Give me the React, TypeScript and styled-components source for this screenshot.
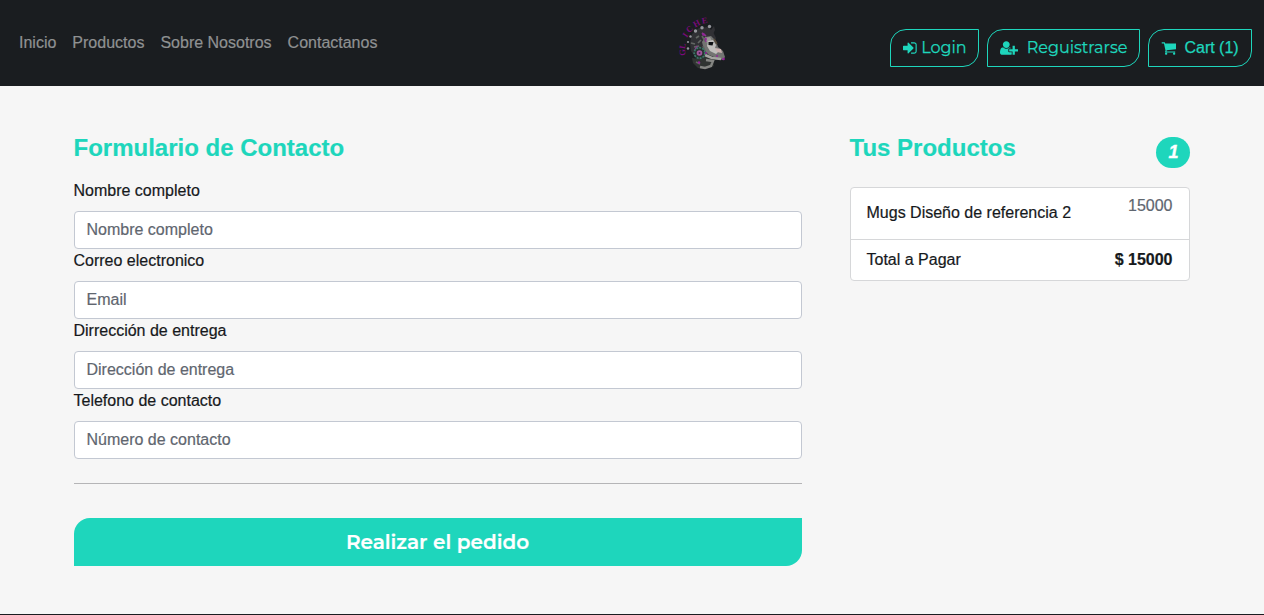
import React from "react";
import styled, { createGlobalStyle } from "styled-components";

const TEAL = "#1ed6bc";
const SANS = '"Liberation Sans", Arial, sans-serif';
const ROUND = 'Montserrat, Inter, "Open Sans", sans-serif';

const GlobalStyle = createGlobalStyle`
  *, *::before, *::after { box-sizing: border-box; }
  body {
    margin: 0;
    background: #f6f6f6;
    color: #16191c;
    font: 16px/24px ${SANS};
    -webkit-text-stroke: 0.2px;
    overflow: hidden;
  }
`;

const Page = styled.div`
  display: flex;
  flex-direction: column;
  height: 615px;
  border-bottom: 1px solid #1a1d20;
`;

const Navbar = styled.header`
  display: flex;
  align-items: center;
  height: 86px;
  padding: 0 12px 0 19px;
  background: #1a1d20;
`;

const Menu = styled.nav`
  display: flex;
  gap: 16px;
  width: 655px;
  padding-bottom: 1px;
`;

const MenuLink = styled.a`
  color: #8f9192;
  white-space: nowrap;
`;

const LogoSvg = styled.svg`
  width: 60px;
  height: 60px;
  flex: none;
  -webkit-text-stroke: 0;
`;

const Actions = styled.div`
  display: flex;
  gap: 8px;
  margin-left: auto;
  padding-top: 10px;
`;

const ActionButton = styled.button<{ $width: number; $gap: number; $plain?: boolean }>`
  display: flex;
  align-items: center;
  gap: ${(p) => p.$gap}px;
  width: ${(p) => p.$width}px;
  height: 38px;
  padding: 0 0 1px 12px;
  border: 1px solid ${TEAL};
  border-radius: 16px 0 16px 0;
  background: transparent;
  color: ${TEAL};
  font: 16px/24px ${(p) => (p.$plain ? SANS : ROUND)};
  -webkit-text-stroke: 0.25px;
  white-space: nowrap;
`;

const Glyph = styled.svg`
  height: 16px;
  flex: none;
  fill: currentColor;
`;

const Content = styled.main`
  display: grid;
  grid-template-columns: 728px 340px;
  column-gap: 48px;
  align-items: start;
  padding: 47px 74px 0;
`;

const Heading = styled.h4`
  margin: 0;
  color: ${TEAL};
  font-size: 24px;
  line-height: 29px;
  font-weight: 700;
  text-indent: -0.5px;
`;

const Form = styled.form`
  display: flex;
  flex-direction: column;
`;

const FormHeading = styled(Heading)`
  margin-bottom: 17px;
`;

const Field = styled.label`
  display: flex;
  flex-direction: column;
  gap: 8px;
  text-indent: -0.5px;
`;

const Input = styled.input`
  width: 100%;
  height: 38px;
  padding: 0 11.5px 1px;
  border: 1px solid #c3c8d2;
  border-radius: 4px;
  background: #fff;
  font: 16px/24px ${SANS};
  text-indent: 0;
  -webkit-text-stroke: 0.2px;
  &::placeholder { color: #5f666f; opacity: 1; }
`;

const Divider = styled.hr`
  width: 100%;
  height: 1px;
  margin: 24px 0 34px;
  border: 0;
  background: #b5b5b7;
`;

const Submit = styled.button`
  height: 48px;
  border: 0;
  padding: 0 1px 0 0;
  border-radius: 16px 0 16px 0;
  background: ${TEAL};
  color: #fff;
  font: 600 20px/30px ${ROUND};
  -webkit-text-stroke: 0.2px;
`;

const SummaryHeader = styled.div`
  display: flex;
  justify-content: space-between;
  height: 54px;
`;

const Badge = styled.span`
  width: 34px;
  height: 31px;
  margin-top: 4px;
  padding-left: 1px;
  border-radius: 16px;
  background: ${TEAL};
  color: #fff;
  font: italic 700 18px/31px "Liberation Sans Narrow", ${SANS};
  -webkit-text-stroke: 0.4px;
  text-align: center;
`;

const List = styled.ul`
  margin: 0;
  padding: 0;
  list-style: none;
  border: 1px solid #d6d7d9;
  border-radius: 4px;
  background: #fff;
`;

const ProductRow = styled.li`
  display: flex;
  justify-content: space-between;
  height: 51px;
  padding: 6px 16.5px 0 15.5px;
`;

const ProductName = styled.span`
  padding-top: 7px;
`;

const Price = styled.span`
  color: #5f666f;
`;

const TotalRow = styled.li`
  display: flex;
  justify-content: space-between;
  height: 41px;
  padding: 8px 16.5px 0 15.5px;
  border-top: 1px solid #d6d7d9;
`;

const SIGN_IN =
  "M1184 896q0 26-19 45l-544 544q-19 19-45 19t-45-19-19-45v-288h-448q-26 0-45-19t-19-45v-384q0-26 19-45t45-19h448v-288q0-26 19-45t45-19 45 19l544 544q19 19 19 45zm352-352v704q0 119-84.500 203.500t-203.500 84.500h-320q-13 0-22.500-9.500t-9.500-22.500q0-4-1-20t-.5-26.500 3-23.500 10-19.500 20.500-6.500h320q66 0 113-47t47-113v-704q0-66-47-113t-113-47h-312l-11.500-1-11.500-3-8-5.500-7-9-2-13.500q0-4-1-20t-.5-26.500 3-23.500 10-19.500 20.500-6.500h320q119 0 203.500 84.500t84.500 203.500z";
const USER_PLUS =
  "M704 896q-159 0-271.500-112.500t-112.500-271.500 112.500-271.500 271.500-112.500 271.500 112.500 112.500 271.500-112.500 271.500-271.500 112.500zm960 128h352q13 0 22.500 9.500t9.500 22.500v192q0 13-9.500 22.500t-22.500 9.500h-352v352q0 13-9.500 22.500t-22.500 9.500h-192q-13 0-22.500-9.500t-9.500-22.500v-352h-352q-13 0-22.500-9.500t-9.500-22.500v-192q0-13 9.500-22.500t22.500-9.500h352v-352q0-13 9.500-22.500t22.500-9.500h192q13 0 22.500 9.500t9.500 22.500v352zm-736 224q0 52 38 90t90 38h256v238q-68 50-171 50h-874q-121 0-194-69t-73-190q0-53 3.500-103.500t14-109 26.500-108.500 43-97.500 62-81 85.500-53.500 111.500-20q19 0 39 17 79 61 154.500 91.500t164.500 30.500 164.500-30.500 154.500-91.500q20-17 39-17 132 0 217 96h-223q-52 0-90 38t-38 90v192z";
const CART =
  "M704 1536q0 52-38 90t-90 38-90-38-38-90 38-90 90-38 90 38 38 90zm896 0q0 52-38 90t-90 38-90-38-38-90 38-90 90-38 90 38 38 90zm128-1088v512q0 24-16.500 42.500t-40.500 21.500l-1044 122q13 60 13 70 0 16-24 64h920q26 0 45 19t19 45-19 45-45 19h-1024q-26 0-45-19t-19-45q0-11 8-31.500t16-36 21.500-40 15.500-29.500l-177-823h-204q-26 0-45-19t-19-45 19-45 45-19h256q16 0 28.500 6.500t19.500 15.500 13 24.500 8 26 5.500 29.500 4.500 26h1201q26 0 45 19t19 45z";

const crest = [
  { letter: "G", x: 22.5, y: 52.5, turn: -95 },
  { letter: "L", x: 22.5, y: 46, turn: -80 },
  { letter: "I", x: 25.5, y: 35, turn: -55 },
  { letter: "C", x: 29.5, y: 29, turn: -42 },
  { letter: "H", x: 36.5, y: 23.5, turn: -28 },
  { letter: "E", x: 44.5, y: 20.5, turn: -10 },
];

/* Warrior head in profile with a studded crest and lettering around it. */
const Logo = () => (
  <LogoSvg viewBox="14 13 60 60" role="img" aria-label="Logo">
    <g fill="#7b0a7c" fontFamily="Liberation Serif, serif" fontWeight="700" fontSize="8.5" textAnchor="middle">
      {crest.map((c) => (
        <text key={c.letter} transform={`translate(${c.x} ${c.y}) rotate(${c.turn})`} y="2.8">
          {c.letter}
        </text>
      ))}
    </g>
    <g fill="#303034">
      <path d="M30 43l2-9 7-6 9-1 5 5 3 6-3 9-3 8-5 6-8-2-6-8z" />
      <path d="M48 34l6-8 1 4-3 6z" />
    </g>
    <path d="M32 58l8 1 6-4 6 4 2 7-8 3-8-1-5-5z" fill="#303432" />
    <path d="M42 42l3-5 6-1 5 5 2 6 5 4 2 6-2 3-7-2-7-3-5-5z" fill="#737472" />
    <path d="M44 38l6-1 2 4-5 2z" fill="#989895" />
    <path d="M48 41l5-1 3 5-1 3 4 3-3 3-6-3-3-5z" fill="#bfbebb" />
    <path d="M55 48l6 1 1 4-5-1z" fill="#cbb3b1" />
    <path d="M48.500 42l5 0-1 3.500-4-.5z" fill="#0d1013" />
    <path d="M54 39l3 5" stroke="#584c3c" strokeWidth="1.500" />
    <path d="M45 55l7 3 9 1" fill="none" stroke="#a5a5a1" strokeWidth="2.500" />
    <path d="M46 60l7 1-2 5-6 2-5-1" fill="none" stroke="#858683" strokeWidth="2.400" />
    <path d="M36 38l3-2M42 36l3 5M31 43l4 1M38 43l3-3M34 47l5-1M36 62l4 2M43 46l2 5" stroke="#626663" strokeWidth="1.700" />
    <path d="M42 33l4 3M45 38l1 4M35 50l2-4" stroke="#89398c" strokeWidth="1.600" />
    <g fill="#96979d">
      <circle cx="30.500" cy="36.500" r="1.200" />
      <circle cx="35.500" cy="31" r="1.700" />
      <circle cx="42" cy="27.800" r="1.700" />
      <circle cx="49.500" cy="26.500" r="1.700" />
      <circle cx="28" cy="42" r="1.100" />
      <circle cx="28" cy="48.500" r="1.200" />
    </g>
    <circle cx="39.500" cy="53" r="5.300" fill="#26322f" stroke="#3b7869" strokeWidth="1.700" strokeDasharray="2 1" />
    <circle cx="39.500" cy="53" r="2.800" fill="#a2559c" />
    <circle cx="39.500" cy="53" r="1" fill="#4a2450" />
    <g fill="#95209a">
      <circle cx="43.500" cy="34.500" r="1.300" />
      <circle cx="46" cy="39" r="0.900" />
      <circle cx="39" cy="62.500" r="1.200" />
      <circle cx="46" cy="53" r="1" />
      <circle cx="57" cy="56" r="0.900" />
      <circle cx="63.500" cy="59" r="1.300" />
    </g>
  </LogoSvg>
);

const links = ["Inicio", "Productos", "Sobre Nosotros", "Contactanos"];

const fields = [
  { label: "Nombre completo", placeholder: "Nombre completo" },
  { label: "Correo electronico", placeholder: "Email" },
  { label: "Dirrección de entrega", placeholder: "Dirección de entrega" },
  { label: "Telefono de contacto", placeholder: "Número de contacto" },
];

export default function App() {
  return (
    <Page>
      <GlobalStyle />
      <Navbar>
        <Menu>
          {links.map((text) => (
            <MenuLink key={text}>{text}</MenuLink>
          ))}
        </Menu>
        <Logo />
        <Actions>
          <ActionButton $width={89} $gap={4.5}>
            <Glyph viewBox="0 0 1536 1792"><path d={SIGN_IN} /></Glyph>
            Login
          </ActionButton>
          <ActionButton $width={153} $gap={8.5}>
            <Glyph viewBox="0 0 2048 1792"><path d={USER_PLUS} /></Glyph>
            Reguistrarse
          </ActionButton>
          <ActionButton $width={104} $gap={8} $plain>
            <Glyph viewBox="0 0 1728 1792"><path d={CART} /></Glyph>
            Cart (1)
          </ActionButton>
        </Actions>
      </Navbar>
      <Content>
        <Form>
          <FormHeading>Formulario de Contacto</FormHeading>
          {fields.map((f) => (
            <Field key={f.label}>
              {f.label}
              <Input placeholder={f.placeholder} />
            </Field>
          ))}
          <Divider />
          <Submit type="button">Realizar el pedido</Submit>
        </Form>
        <aside>
          <SummaryHeader>
            <Heading>Tus Productos</Heading>
            <Badge>1</Badge>
          </SummaryHeader>
          <List>
            <ProductRow>
              <ProductName>Mugs Diseño de referencia 2</ProductName>
              <Price>15000</Price>
            </ProductRow>
            <TotalRow>
              <span>Total a Pagar</span>
              <strong>$ 15000</strong>
            </TotalRow>
          </List>
        </aside>
      </Content>
    </Page>
  );
}
